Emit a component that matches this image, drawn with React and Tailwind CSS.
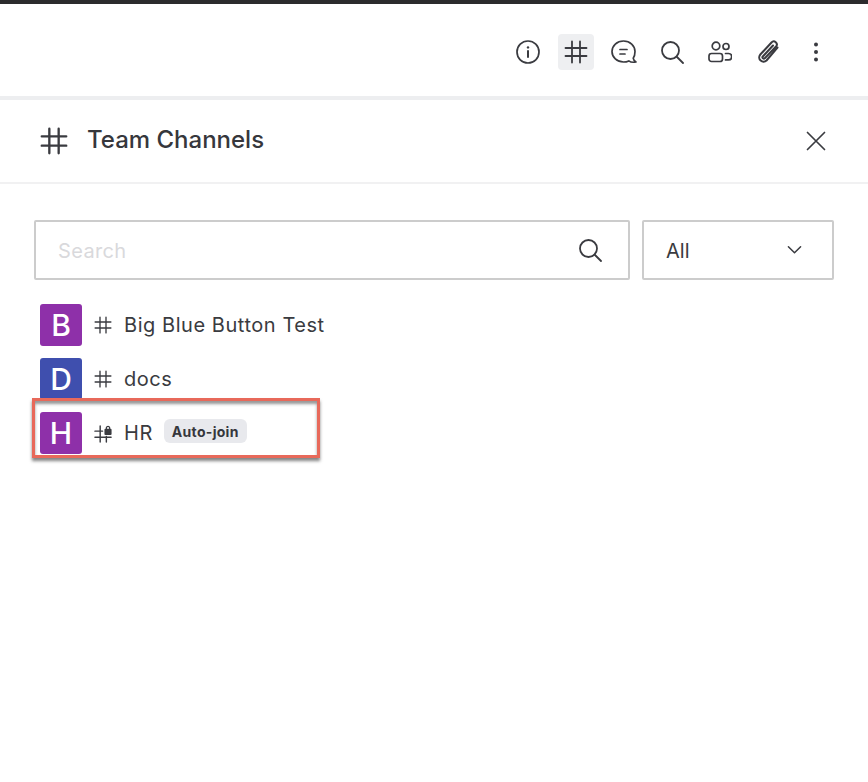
import React from 'react';

const Hash = ({ className, strokeWidth = 2 }) => (
  <svg viewBox="0 0 24 24" fill="none" stroke="currentColor" strokeWidth={strokeWidth} strokeLinecap="round" className={className}>
    <path d="M8 1.5v21M16 1.5v21M1.5 8h21M1.5 16h21" />
  </svg>
);

const HashLock = ({ className }) => (
  <svg viewBox="0 0 20 20" fill="none" stroke="currentColor" strokeWidth="1.5" strokeLinecap="round" className={className}>
    <path d="M6.5 2v17M13 13v6M1 7.500h8M1 14h17" />
    <rect x="11" y="5" width="7.500" height="6.500" rx="1" fill="currentColor" stroke="none" />
    <path d="M13 5.500V3.800a1.800 1.800 0 0 1 3.500 0v1.700" strokeWidth="1.300" />
  </svg>
);

const SearchIcon = ({ className }) => (
  <svg viewBox="0 0 24 24" fill="none" stroke="currentColor" strokeWidth="1.800" strokeLinecap="round" className={className}>
    <circle cx="10.500" cy="10.500" r="8.500" />
    <path d="M17 17l6 6" />
  </svg>
);

const toolbarIcons = [
  {
    name: 'info',
    icon: (
      <svg viewBox="0 0 24 24" fill="none" stroke="currentColor" strokeWidth="1.700" strokeLinecap="round" className="w-6 h-6">
        <circle cx="12" cy="12" r="11" />
        <path d="M12 11v6" strokeWidth="2" />
        <circle cx="12" cy="7.400" r="1.200" fill="currentColor" stroke="none" />
      </svg>
    ),
  },
  {
    name: 'channels',
    active: true,
    icon: <Hash className="w-6 h-6" strokeWidth={1.800} />,
  },
  {
    name: 'threads',
    icon: (
      <svg viewBox="0 0 26 24" fill="none" stroke="currentColor" strokeWidth="1.700" strokeLinecap="round" strokeLinejoin="round" className="w-[26px] h-6">
        <path d="M12.500 1C6 1 1 5.600 1 11.500S6 22 12.500 22c2 0 3.800-.4 5.300-1.100 1.800 1.300 4.700 1.600 7.200 1-1.500-.8-2.600-2-2.800-3.700C23.500 16.400 24 14 24 11.500 24 5.600 19 1 12.500 1z" />
        <path d="M9 9.500h7M9 14h5" />
      </svg>
    ),
  },
  {
    name: 'search',
    icon: <SearchIcon className="w-6 h-6" />,
  },
  {
    name: 'members',
    icon: (
      <svg viewBox="0 0 24 22" fill="none" stroke="currentColor" strokeWidth="1.700" strokeLinecap="round" className="w-6 h-[22px]">
        <circle cx="8" cy="5" r="3.800" />
        <circle cx="18" cy="5.500" r="3" />
        <rect x="1" y="12.500" width="13.500" height="8" rx="2.500" />
        <path d="M17.500 12.500h3a3.200 3.200 0 0 1 0 6.400h-3" />
      </svg>
    ),
  },
  {
    name: 'files',
    icon: (
      <svg viewBox="0 0 24 24" fill="none" stroke="currentColor" strokeWidth="2" strokeLinecap="round" strokeLinejoin="round" className="w-6 h-6">
        <path d="M21.500 7.500L10.500 20.500a4.300 4.300 0 0 1-6.400-5.700L15.500 2.500a3 3 0 0 1 4.500 4L8.800 18.200a1.300 1.300 0 0 1-2-1.700L17 5.500" />
      </svg>
    ),
  },
  {
    name: 'more',
    icon: (
      <svg viewBox="0 0 24 24" fill="currentColor" className="w-6 h-6">
        <circle cx="12" cy="4.500" r="2" />
        <circle cx="12" cy="12" r="2" />
        <circle cx="12" cy="19.500" r="2" />
      </svg>
    ),
  },
];

const channels = [
  { letter: 'B', name: 'Big Blue Button Test', color: 'bg-[#8e30a9]' },
  { letter: 'D', name: 'docs', color: 'bg-[#3f4fae]' },
  { letter: 'H', name: 'HR', color: 'bg-[#8e30a9]', locked: true, badge: 'Auto-join', highlight: true },
];

const App = () => {
  return (
    <div className="w-[868px] h-[782px] bg-white overflow-hidden text-[#3a3b40] font-['Inter',sans-serif]">
      <div className="h-1 bg-[#2b2b2d]" />

      {/* Toolbar */}
      <div className="h-[92px] flex items-center justify-end gap-3 pr-[34px] pt-1">
        {toolbarIcons.map((item) => (
          <button
            key={item.name}
            className={`w-9 h-9 flex items-center justify-center rounded-sm ${item.active ? 'bg-[#eeeff1]' : ''}`}
          >
            {item.icon}
          </button>
        ))}
      </div>
      <div className="h-1 bg-[#edeef0]" />

      {/* Header */}
      <div className="h-[84px] flex items-center justify-between pl-10 pr-[42px] border-b-2 border-[#f1f1f2]">
        <div className="flex items-center gap-5">
          <Hash className="w-7 h-7" />
          <h1 className="text-[24px] font-medium leading-8 text-[#36373c] -ml-px -mt-0.5">Team Channels</h1>
        </div>
        <svg viewBox="0 0 20 20" fill="none" stroke="currentColor" strokeWidth="1.700" strokeLinecap="round" className="w-5 h-5">
          <path d="M1.500 1.500l17 17M18.500 1.500l-17 17" />
        </svg>
      </div>

      {/* Filters */}
      <div className="flex gap-3 pl-[34px] pr-[34px] pt-9">
        <div className="w-[596px] h-[60px] flex items-center justify-between pl-[22px] pr-[26px] border-2 border-[#cccccc] rounded-[2px]">
          <span className="text-[20px] tracking-[0.35px] text-[#d9d9dc] mt-0.5">Search</span>
          <SearchIcon className="w-6 h-6" />
        </div>
        <div className="w-[192px] h-[60px] flex items-center justify-between pl-[22px] pr-[30px] border-2 border-[#cccccc] rounded-[2px]">
          <span className="text-[20px] mt-0.5">All</span>
          <svg viewBox="0 0 16 10" fill="none" stroke="currentColor" strokeWidth="1.600" strokeLinecap="round" strokeLinejoin="round" className="w-[15px] h-[10px]">
            <path d="M1.500 1.500L8 8l6.500-6.500" />
          </svg>
        </div>
      </div>

      {/* Channel list */}
      <div className="flex flex-col gap-3 pl-10 pt-6">
        {channels.map((channel) => (
          <div key={channel.name} className="relative flex items-center h-[42px]">
            <div className={`w-[42px] h-[42px] flex items-center justify-center rounded-[3px] text-white text-[30px] font-medium ${channel.color}`}>
              {channel.letter}
            </div>
            {channel.locked ? (
              <HashLock className="w-[19px] h-[19px] ml-3" />
            ) : (
              <Hash className="w-[18px] h-[18px] ml-3" strokeWidth={1.800} />
            )}
            <span className={`text-[20px] tracking-[0.55px] ${channel.locked ? 'ml-[11px]' : 'ml-3'}`}>{channel.name}</span>
            {channel.badge && (
              <span className="ml-[11px] mb-1 h-6 px-2 flex items-center rounded-md bg-[#e8e9ed] text-[14px] font-bold tracking-[0.3px] text-[#36373c]">
                {channel.badge}
              </span>
            )}
            {channel.highlight && (
              <div className="absolute left-[-8px] top-[-14px] w-[288px] h-[60px] border-[3px] border-[#e8695a] shadow-[0_3px_3px_rgba(50,50,50,0.6),inset_0_3px_3px_rgba(50,50,50,0.5)]" />
            )}
          </div>
        ))}
      </div>
    </div>
  );
};

export default App;
